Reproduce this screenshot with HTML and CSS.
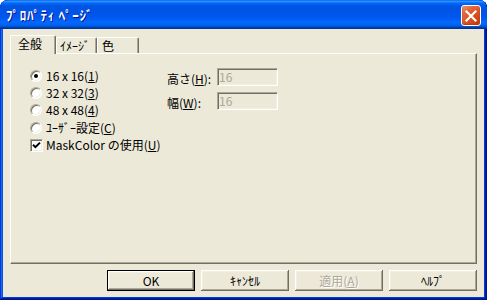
FILE: index.html
```html
<!DOCTYPE html>
<html lang="ja">
<head>
<meta charset="utf-8">
<title>ﾌﾟﾛﾊﾟﾃｨ ﾍﾟｰｼﾞ</title>
<link rel="stylesheet" href="styles.css">
</head>
<body>
<div class="window">
  <div class="titlebar">
    <span class="title">ﾌﾟﾛﾊﾟﾃｨ ﾍﾟｰｼﾞ</span>
    <button class="close" aria-label="閉じる"><svg width="12" height="12" viewBox="0 0 12 12"><path d="M1.5 1.5 L10.5 10.5 M10.5 1.5 L1.5 10.5" stroke="#fff" stroke-width="2.2" stroke-linecap="square" fill="none"/></svg></button>
  </div>
  <div class="client">
    <div class="tabs">
      <div class="tab active">全般</div>
      <div class="tab t2">ｲﾒｰｼﾞ</div>
      <div class="tab t3">色</div>
    </div>
    <div class="panel">
      <div class="options">
        <div class="opt"><span class="radio checked"></span><span>16 x 16(<u>1</u>)</span></div>
        <div class="opt"><span class="radio"></span><span>32 x 32(<u>3</u>)</span></div>
        <div class="opt"><span class="radio"></span><span>48 x 48(<u>4</u>)</span></div>
        <div class="opt"><span class="radio"></span><span>ﾕｰｻﾞｰ設定(<u>C</u>)</span></div>
        <div class="opt chk"><span class="check"><svg width="9" height="9" viewBox="0 0 9 9"><path d="M1 3.8 L3.4 6.2 L8 1.6" stroke="#000" stroke-width="2" fill="none"/></svg></span><span>MaskColor の使用(<u>U</u>)</span></div>
      </div>
      <div class="size">
        <span class="lbl">高さ(<u>H</u>):</span><span class="field">16</span>
        <span class="lbl">幅(<u>W</u>):</span><span class="field">16</span>
      </div>
    </div>
    <div class="buttons">
      <button class="btn default">OK</button>
      <button class="btn">ｷｬﾝｾﾙ</button>
      <button class="btn disabled">適用(<u>A</u>)</button>
      <button class="btn">ﾍﾙﾌﾟ</button>
    </div>
  </div>
</div>
</body>
</html>
```
FILE: styles.css
```css
* { box-sizing: border-box; }
html, body { margin: 0; padding: 0; }
body {
  width: 487px;
  height: 300px;
  overflow: hidden;
  background: #ffffff;
  font-family: "Noto Sans CJK JP", "Liberation Sans", sans-serif;
  font-size: 12px;
  color: #000;
}
.window {
  width: 487px;
  height: 300px;
  display: flex;
  flex-direction: column;
  background: #0054e3;
  border-radius: 8px 8px 0 0;
  overflow: hidden;
  box-shadow: inset -1px -1px #00138c, inset 1px 1px #0831d9, inset -2px -2px #001ea0, inset 2px 2px #166aee, inset -3px -3px #003bda, inset 3px 3px #0855dd;
}
.titlebar {
  flex: 0 0 29px;
  display: flex;
  align-items: center;
  justify-content: space-between;
  padding: 0 6px 0 6px;
  border-radius: 8px 8px 0 0;
  background: linear-gradient(180deg, #0058ee 0%, #3593ff 4%, #288eff 6%, #127dff 8%, #036ffc 10%, #0262ee 14%, #0057e5 20%, #0054e3 24%, #0055eb 56%, #005bf5 66%, #026afe 76%, #0062ef 86%, #0052d6 92%, #0040ab 94%, #003092 100%);
}
.title {
  color: #fff;
  font-weight: bold;
  font-size: 13px;
  line-height: 1;
  letter-spacing: 0.7px;
  text-shadow: 1px 1px #0f1089;
  white-space: nowrap;
}
.close {
  width: 20px;
  height: 21px;
  margin-top: 2px;
  padding: 0;
  border: 1px solid #fff;
  border-radius: 3px;
  display: flex;
  align-items: center;
  justify-content: center;
  background: radial-gradient(circle at 90% 90%, #c73d06 0%, #e0562a 55%, #e2693f 72%, #eb9a78 100%);
  box-shadow: inset 0 -1px 2px #b53a0a;
}
.client {
  flex: 1;
  margin: 0 3px 3px;
  background: #ece9d8;
  padding: 6px 7px 6px 7px;
  display: flex;
  flex-direction: column;
}
.tabs {
  flex: 0 0 18px;
  display: flex;
  align-items: flex-end;
  position: relative;
  z-index: 1;
}
.tab {
  height: 16px;
  border-top: 1px solid #fff;
  border-left: 1px solid #fff;
  border-right: 1px solid #716f64;
  box-shadow: inset -1px 0 #aca899;
  border-radius: 2px 2px 0 0;
  background: #ece9d8;
  display: flex;
  align-items: center;
  padding-left: 4px;
  line-height: 1;
  white-space: nowrap;
}
.tab.active {
  width: 46px;
  height: 19px;
  margin-bottom: -1px;
  padding-left: 7px;
  padding-bottom: 2px;
}
.tab.t2 { width: 41px; padding-left: 3px; }
.tab.t3 { width: 42px; }
.panel {
  flex: 0 0 211px;
  border: 1px solid;
  border-color: #fff #716f64 #716f64 #fff;
  box-shadow: inset -1px -1px #aca899;
  padding: 13px 0 0 19px;
  display: flex;
  align-items: flex-start;
}
.options {
  width: 137px;
  display: flex;
  flex-direction: column;
}
.opt {
  height: 17.4px;
  display: flex;
  align-items: center;
  gap: 4px;
  white-space: nowrap;
  line-height: 1;
}
.opt.chk { gap: 3px; }
.radio {
  flex: 0 0 12px;
  width: 12px;
  height: 12px;
  border-radius: 50%;
  background: #fff;
  border: 1px solid;
  border-color: #aca899 #fff #fff #aca899;
  box-shadow: inset 1px 1px 0 #716f64, inset -1px -1px 0 #f1efe2;
  display: flex;
  align-items: center;
  justify-content: center;
}
.radio.checked::after {
  content: "";
  width: 4px;
  height: 4px;
  border-radius: 50%;
  background: #000;
}
.check {
  flex: 0 0 13px;
  width: 13px;
  height: 13px;
  background: #fff;
  border: 1px solid;
  border-color: #aca899 #fff #fff #aca899;
  box-shadow: inset 1px 1px 0 #716f64, inset -1px -1px 0 #f1efe2;
  display: flex;
  align-items: center;
  justify-content: center;
}
.size {
  margin-top: 1px;
  display: grid;
  grid-template-columns: 50px 61px;
  grid-auto-rows: 18px;
  row-gap: 6px;
  align-items: center;
}
.lbl {
  padding-top: 3px;
  line-height: 1;
  white-space: nowrap;
}
.field {
  height: 18px;
  border: 1px solid;
  border-color: #aca899 #fff #fff #aca899;
  box-shadow: inset 1px 1px 0 #716f64, inset -1px -1px 0 #f1efe2;
  color: #aca899;
  padding-left: 1px;
  line-height: 16px;
}
.buttons {
  flex: 0 0 21px;
  margin-top: 6px;
  display: flex;
  justify-content: flex-end;
  gap: 6px;
}
.btn {
  width: 88px;
  height: 21px;
  padding: 0;
  border: none;
  font-family: inherit;
  font-size: 12px;
  line-height: 1;
  color: #000;
  background: #ece9d8;
  box-shadow: inset -1px -1px #716f64, inset 1px 1px #fff, inset -2px -2px #aca899, inset 2px 2px #f1efe2;
}
.btn.default { border: 1px solid #000; }
.btn.disabled { color: #aca899; text-shadow: 1px 1px #fff; }
```
